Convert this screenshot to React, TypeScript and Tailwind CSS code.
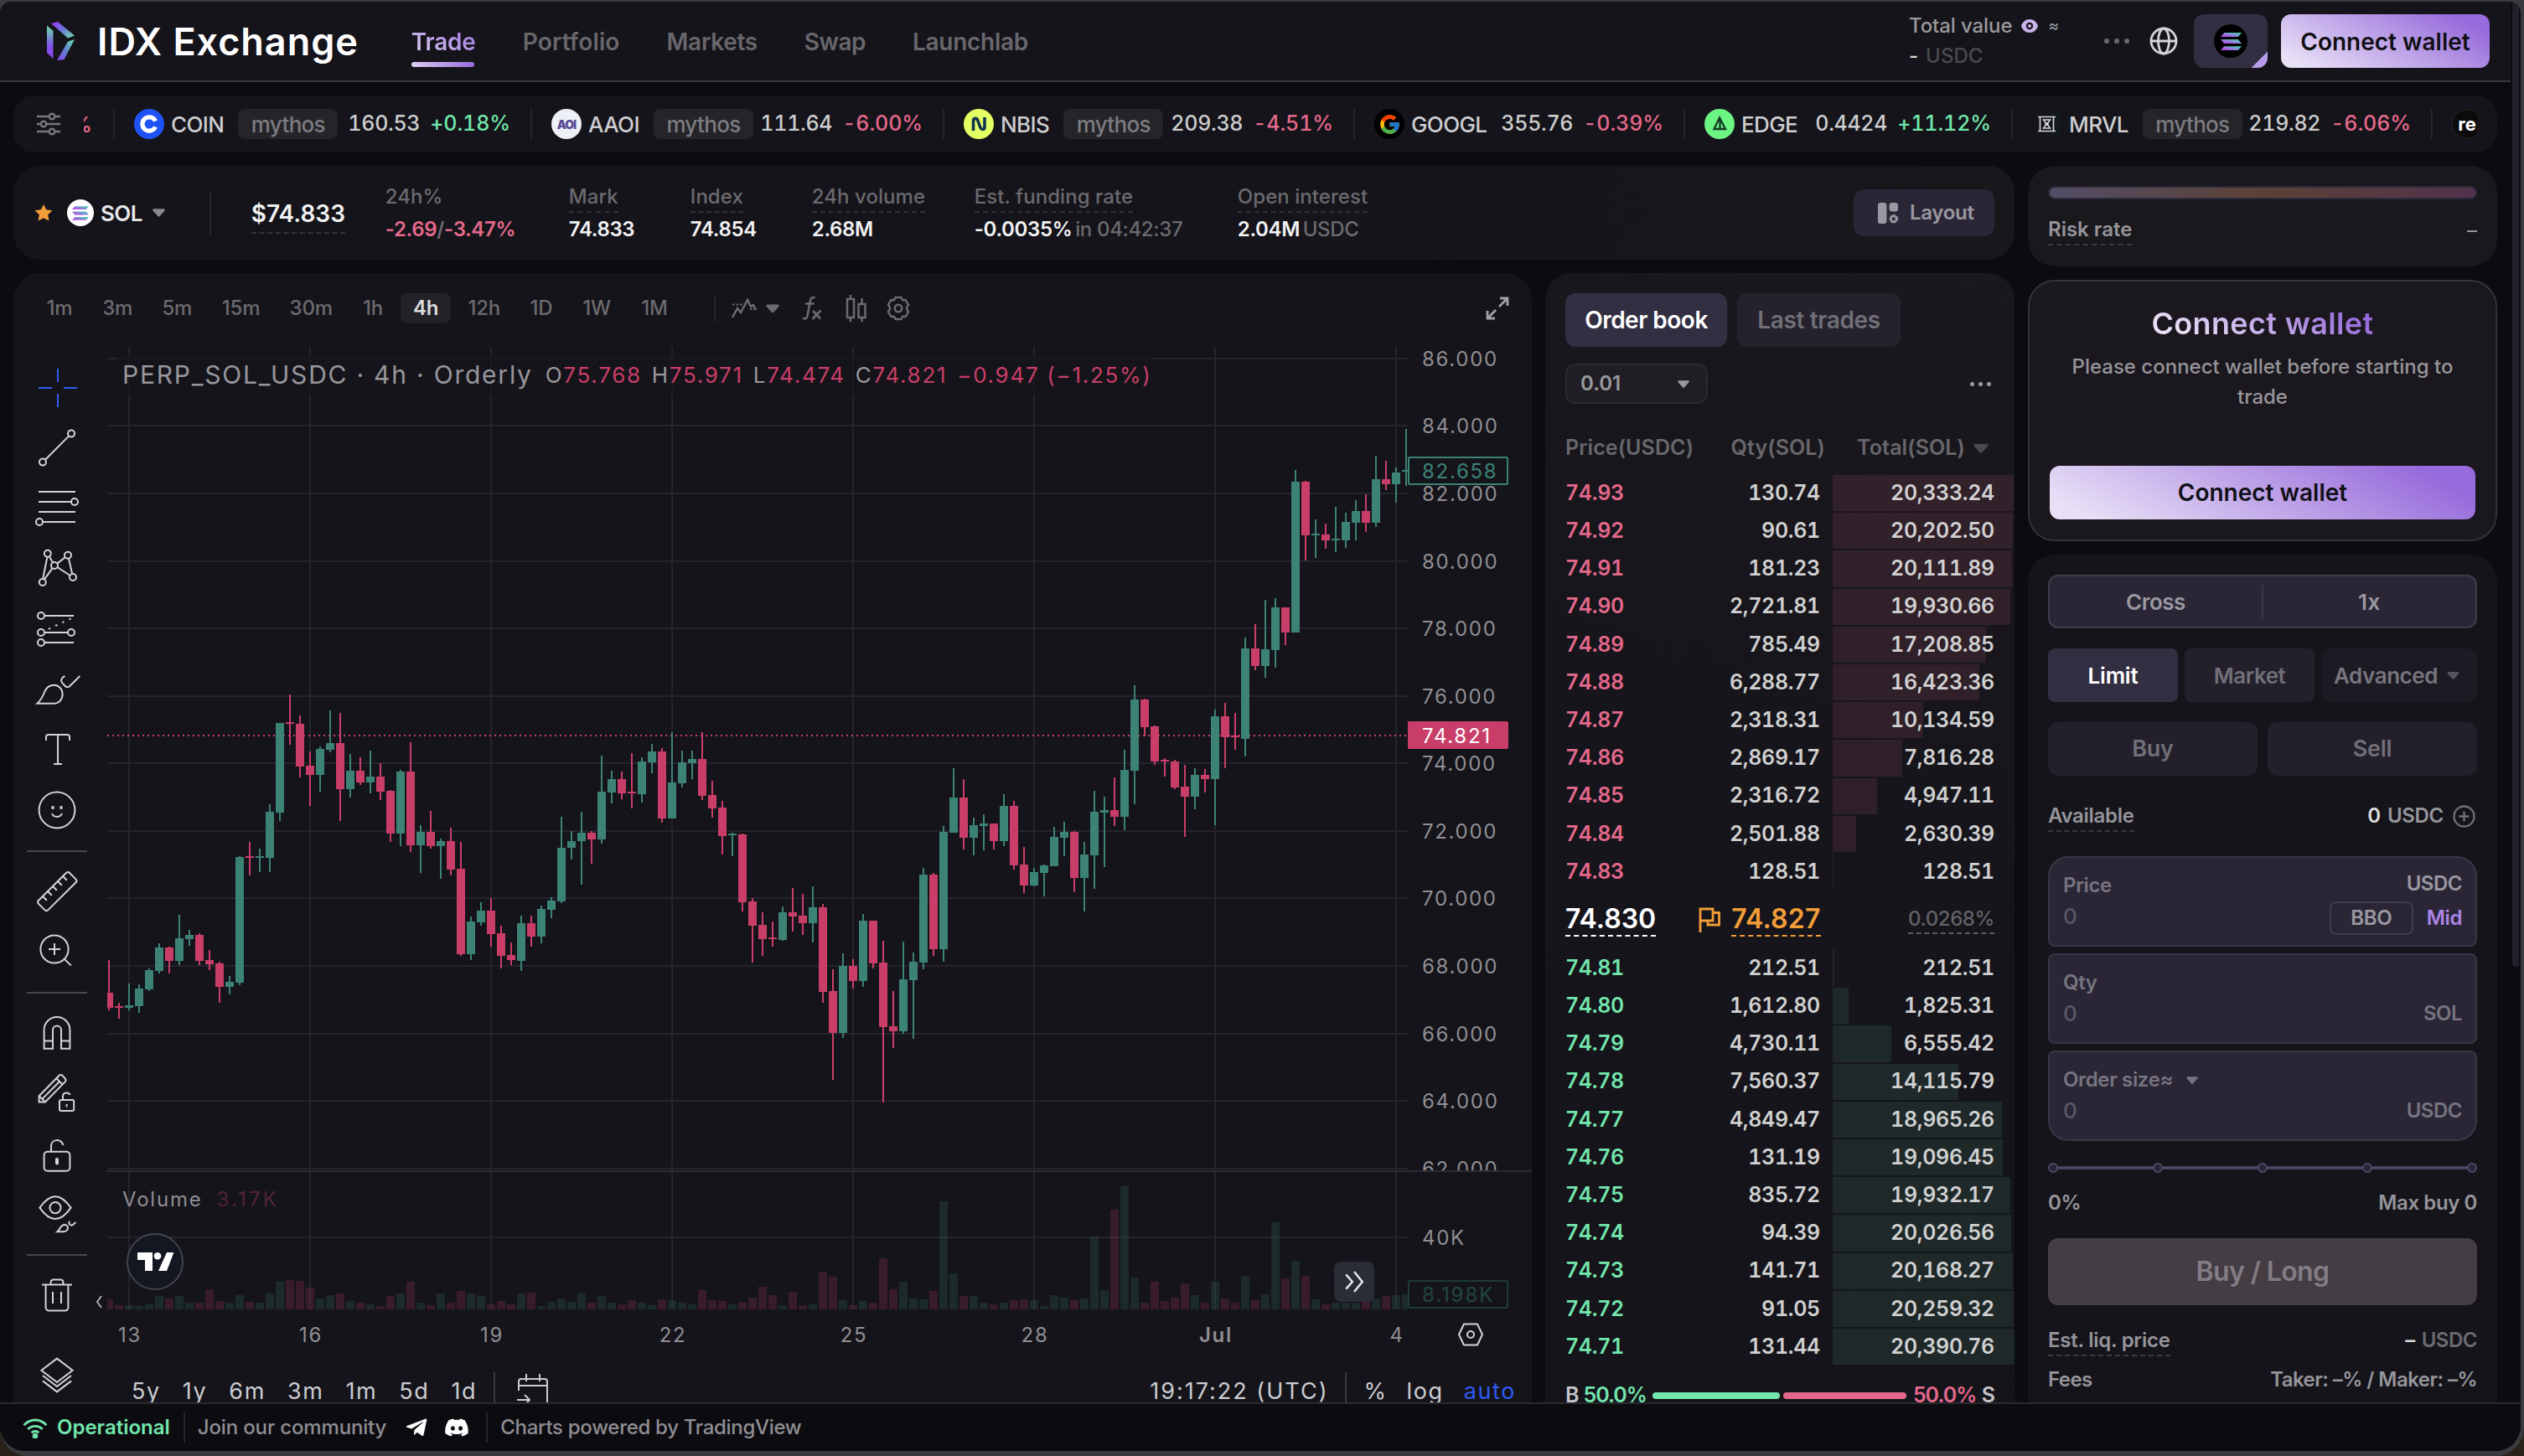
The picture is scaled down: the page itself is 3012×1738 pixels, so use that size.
import type { ReactNode } from "react";
import { FaDiscord, FaTelegramPlane } from "react-icons/fa";
import { FcGoogle } from "react-icons/fc";

/* ---------------------------------- data --------------------------------- */

type Candle = [high: number, top: number, bottom: number, low: number, up: 0 | 1, volume: number];

// One entry per 4h candle, in chart pixels.
const CANDLES: Candle[] = [
  [1146, 1185, 1203, 1206, 0, 12], [1197, 1201, 1203, 1216, 0, 5], [1174, 1200, 1203, 1206, 1, 5],
  [1175, 1180, 1201, 1209, 1, 4], [1156, 1158, 1181, 1183, 1, 6], [1126, 1131, 1159, 1162, 1, 16],
  [1130, 1131, 1147, 1162, 0, 13], [1092, 1120, 1147, 1152, 1, 16], [1110, 1116, 1121, 1129, 1, 8],
  [1114, 1116, 1147, 1152, 0, 8], [1134, 1146, 1151, 1158, 0, 24], [1148, 1150, 1178, 1197, 0, 10],
  [1165, 1172, 1178, 1187, 1, 8], [1022, 1023, 1173, 1176, 1, 17], [1005, 1022, 1024, 1045, 0, 9],
  [1013, 1022, 1024, 1041, 1, 8], [960, 969, 1024, 1041, 1, 19], [863, 863, 970, 980, 1, 33],
  [829, 862, 864, 889, 0, 35], [854, 864, 915, 928, 0, 34], [897, 914, 925, 962, 0, 26],
  [891, 894, 925, 945, 1, 13], [848, 887, 895, 898, 1, 17], [851, 887, 942, 980, 0, 19],
  [900, 920, 942, 952, 1, 10], [904, 920, 934, 937, 0, 8], [896, 927, 934, 947, 1, 6],
  [911, 927, 945, 955, 0, 4], [943, 944, 995, 1005, 0, 16], [919, 921, 995, 1010, 1, 19],
  [886, 921, 1009, 1017, 0, 33], [985, 993, 1009, 1042, 1, 8], [968, 993, 1010, 1013, 0, 5],
  [1001, 1004, 1010, 1049, 1, 19], [988, 1004, 1038, 1045, 0, 8], [1005, 1037, 1139, 1141, 0, 22],
  [1094, 1100, 1139, 1146, 1, 19], [1077, 1087, 1101, 1105, 1, 16], [1072, 1087, 1115, 1130, 0, 6],
  [1105, 1114, 1141, 1156, 0, 10], [1125, 1140, 1146, 1152, 0, 6], [1093, 1102, 1147, 1159, 1, 19],
  [1093, 1102, 1118, 1130, 0, 20], [1081, 1085, 1118, 1126, 1, 4], [1071, 1075, 1086, 1096, 1, 9],
  [975, 1012, 1076, 1078, 1, 13], [992, 1004, 1012, 1026, 1, 9], [969, 994, 1004, 1056, 1, 19],
  [992, 994, 1002, 1031, 0, 8], [902, 945, 1002, 1007, 1, 16], [920, 930, 946, 959, 1, 8],
  [921, 930, 947, 954, 0, 6], [899, 945, 947, 965, 0, 11], [904, 909, 948, 958, 1, 8],
  [888, 897, 910, 923, 1, 5], [893, 897, 977, 982, 0, 12], [874, 934, 977, 977, 1, 11],
  [896, 910, 935, 940, 1, 8], [896, 906, 911, 930, 1, 6], [874, 906, 950, 955, 0, 23],
  [932, 949, 965, 976, 0, 11], [956, 964, 998, 1020, 0, 10], [994, 995, 997, 1022, 1, 6],
  [995, 996, 1077, 1088, 0, 9], [1072, 1076, 1105, 1149, 0, 14], [1089, 1104, 1121, 1141, 0, 27],
  [1100, 1119, 1121, 1130, 0, 17], [1082, 1089, 1122, 1123, 1, 5], [1060, 1089, 1094, 1112, 0, 21],
  [1067, 1093, 1102, 1116, 0, 5], [1058, 1083, 1102, 1125, 1, 6], [1079, 1083, 1184, 1197, 0, 45],
  [1157, 1183, 1233, 1289, 0, 39], [1138, 1153, 1233, 1239, 1, 11], [1145, 1153, 1171, 1180, 0, 5],
  [1091, 1099, 1171, 1178, 1, 10], [1099, 1099, 1150, 1156, 0, 8], [1123, 1149, 1226, 1316, 0, 61],
  [1183, 1225, 1231, 1251, 0, 24], [1124, 1169, 1231, 1234, 1, 33], [1137, 1148, 1170, 1240, 1, 13],
  [1036, 1044, 1149, 1157, 1, 12], [1042, 1044, 1133, 1141, 0, 22], [986, 993, 1133, 1148, 1, 129],
  [917, 952, 994, 994, 1, 43], [930, 952, 1000, 1014, 0, 16], [976, 985, 1000, 1021, 1, 16],
  [972, 983, 986, 1015, 1, 8], [983, 983, 1004, 1014, 0, 6], [948, 962, 1004, 1010, 1, 8],
  [956, 962, 1033, 1038, 0, 11], [1011, 1032, 1057, 1066, 0, 12], [1036, 1041, 1057, 1058, 1, 11],
  [1032, 1033, 1042, 1070, 1, 4], [987, 999, 1034, 1034, 1, 17], [981, 993, 1000, 1022, 1, 14],
  [992, 993, 1048, 1065, 0, 11], [1005, 1020, 1048, 1088, 1, 13], [944, 969, 1021, 1061, 1, 87],
  [951, 967, 970, 1035, 1, 23], [928, 967, 975, 986, 0, 119], [895, 919, 975, 991, 1, 147],
  [818, 835, 920, 960, 1, 38], [834, 835, 868, 879, 0, 8], [866, 867, 909, 913, 0, 33],
  [905, 907, 909, 927, 0, 10], [907, 909, 940, 942, 0, 14], [913, 939, 951, 999, 0, 31],
  [917, 925, 951, 966, 1, 17], [918, 925, 930, 946, 0, 8], [847, 855, 930, 985, 1, 33],
  [839, 855, 880, 917, 0, 13], [851, 878, 880, 895, 0, 8], [761, 774, 882, 903, 1, 40],
  [745, 774, 795, 800, 0, 11], [716, 775, 795, 809, 1, 18], [714, 725, 776, 797, 1, 104],
  [725, 725, 755, 770, 0, 37], [561, 575, 755, 755, 1, 58], [574, 575, 639, 669, 0, 40],
  [620, 637, 639, 666, 1, 12], [625, 638, 645, 655, 0, 6], [605, 643, 645, 659, 1, 8],
  [612, 623, 645, 654, 1, 8], [597, 610, 624, 645, 1, 8], [590, 610, 624, 635, 0, 10],
  [544, 572, 624, 629, 1, 13], [550, 572, 578, 585, 0, 16], [558, 564, 578, 600, 1, 17],
  [512, 561, 563, 580, 1, 18],
];

const PRICE_LEVELS: [string, number][] = [
  ["86.000", 428], ["84.000", 508], ["82.000", 589], ["80.000", 670], ["78.000", 750],
  ["76.000", 831], ["74.000", 911], ["72.000", 992], ["70.000", 1072], ["68.000", 1153],
  ["66.000", 1234], ["64.000", 1314], ["62.000", 1395],
];

const DAYS: [string, number][] = [
  ["13", 154], ["16", 370], ["19", 586], ["22", 802], ["25", 1018], ["28", 1234], ["Jul", 1450], ["4", 1666],
];

const ASKS: [string, string, string][] = [
  ["74.93", "130.74", "20,333.24"], ["74.92", "90.61", "20,202.50"], ["74.91", "181.23", "20,111.89"],
  ["74.90", "2,721.81", "19,930.66"], ["74.89", "785.49", "17,208.85"], ["74.88", "6,288.77", "16,423.36"],
  ["74.87", "2,318.31", "10,134.59"], ["74.86", "2,869.17", "7,816.28"], ["74.85", "2,316.72", "4,947.11"],
  ["74.84", "2,501.88", "2,630.39"], ["74.83", "128.51", "128.51"],
];

const BIDS: [string, string, string][] = [
  ["74.81", "212.51", "212.51"], ["74.80", "1,612.80", "1,825.31"], ["74.79", "4,730.11", "6,555.42"],
  ["74.78", "7,560.37", "14,115.79"], ["74.77", "4,849.47", "18,965.26"], ["74.76", "131.19", "19,096.45"],
  ["74.75", "835.72", "19,932.17"], ["74.74", "94.39", "20,026.56"], ["74.73", "141.71", "20,168.27"],
  ["74.72", "91.05", "20,259.32"], ["74.71", "131.44", "20,390.76"],
];

const TIMEFRAMES: [string, string][] = [
  ["1m", "w-[62px]"], ["3m", "w-[66px]"], ["5m", "w-[66px]"], ["15m", "w-[76px]"], ["30m", "w-[81px]"],
  ["1h", "w-[56px]"], ["4h", "w-[60px]"], ["12h", "w-[69px]"], ["1D", "w-[57px]"], ["1W", "w-[65px]"], ["1M", "w-[62px]"],
];

/* --------------------------------- icons --------------------------------- */

function SolanaMark({ className }: { className: string }) {
  return (
    <svg viewBox="0 0 24 20" className={className}>
      <defs>
        <linearGradient id="sol" x1="1" y1="0" x2="0" y2="1">
          <stop offset="0" stopColor="#35e9a5" />
          <stop offset="0.5" stopColor="#8a86d8" />
          <stop offset="1" stopColor="#c92af0" />
        </linearGradient>
      </defs>
      <g fill="url(#sol)">
        <path d="M4 0h20l-4 4.6H0z" />
        <path d="M0 7.7h20l4 4.6H4z" />
        <path d="M4 15.4h20L20 20H0z" />
      </g>
    </svg>
  );
}

function Caret({ className }: { className: string }) {
  return (
    <svg viewBox="0 0 16 10" className={className}>
      <path d="M2 0h12c1.600 0 2.300 1.400 1.300 2.500L9.300 9.200c-.7.800-1.900.800-2.600 0L.7 2.500C-.3 1.400.4 0 2 0z" fill="currentColor" />
    </svg>
  );
}

function Dots({ className }: { className: string }) {
  return (
    <svg viewBox="0 0 30 6" className={className} fill="currentColor">
      <circle cx="3" cy="3" r="3" />
      <circle cx="15" cy="3" r="3" />
      <circle cx="27" cy="3" r="3" />
    </svg>
  );
}

function Tool({ children }: { children: ReactNode }) {
  return (
    <div className="flex h-[72px] items-center justify-center">
      <svg viewBox="0 0 28 28" className="size-[56px] text-[#d1d4dc]" fill="none" stroke="currentColor" strokeWidth="1">
        {children}
      </svg>
    </div>
  );
}

function ToolRule() {
  return (
    <div className="flex h-[25px] items-center">
      <div className="h-[2px] w-[72px] bg-[#46464d]" />
    </div>
  );
}

function Toolbar() {
  return (
    <div className="ml-4 flex w-[72px] flex-col pt-[17px]">
      <Tool>
        <path stroke="#2f5bf0" d="M3 14h8M18 14h8M14.500 2.500v8M14.500 17.500v8" />
      </Tool>
      <Tool>
        <circle cx="5.500" cy="22.300" r="2" />
        <circle cx="22.500" cy="5.300" r="2" />
        <path d="M7 20.900 21 6.800" />
      </Tool>
      <Tool>
        <path d="M3 4h22M3 10h19.500M3 16h22M5.500 22H25" />
        <circle cx="24.500" cy="10" r="2" />
        <circle cx="3.500" cy="22" r="2" />
      </Tool>
      <Tool>
        <circle cx="8.400" cy="4.900" r="2" />
        <circle cx="20.500" cy="5.900" r="2" />
        <circle cx="12.500" cy="12" r="2" />
        <circle cx="5.400" cy="22" r="2" />
        <circle cx="23.500" cy="19" r="2" />
        <path d="M9.400 6.600l2.100 3.700M8.200 6.900 5.600 20M11.300 13.600l-4.800 6.700M14.100 10.800l4.800-3.700M14.200 13l7.600 5M21 7.900l2.100 9.100" />
      </Tool>
      <Tool>
        <circle cx="4.500" cy="6" r="2" />
        <circle cx="4.500" cy="16" r="2" />
        <circle cx="22.500" cy="16" r="2" />
        <circle cx="4.500" cy="22" r="2" />
        <path d="M6.500 6H24M6.500 16h14M6.500 22H24" />
        <path d="M9 13.900 22.500 7.600" strokeDasharray="1.200 3.300" />
      </Tool>
      <Tool>
        <path d="M2.200 22.400h9.800c3.400 0 5.300-2.700 5.300-5.700 0-3-2.300-5.300-5-5.300-2.800 0-4.400 1.200-5.500 3.600C5.500 18.400 4.200 20.600 2.200 22.400z" />
        <path d="M18.700 6c-2.400 1.100-2.600 3-1.400 4.300l1.800 1.800c.8.800 1.800.600 2.500-.1L27.700 6" />
      </Tool>
      <Tool>
        <path d="M7.500 8.500V6.300C7.500 5.500 8 5 8.800 5h11.400c.8 0 1.300.5 1.300 1.300v2.200M14.500 5v17.500M12 22.500h5" />
      </Tool>
      <Tool>
        <circle cx="14" cy="14" r="10.700" />
        <path d="M11 16c1 2.600 5 2.600 6 0" />
        <path d="M10.700 12.500h1.600M15.700 12.500h1.600" strokeWidth="1.700" />
      </Tool>
      <ToolRule />
      <Tool>
        <path d="M19.600 2.900c.5-.5 1.300-.5 1.800 0l3.900 3.900c.5.500.5 1.300 0 1.800L8.600 25.200c-.5.500-1.300.5-1.800 0l-3.900-3.900c-.5-.5-.5-1.300 0-1.800z" />
        <path d="M5.500 17l2.400 2.400M8.500 14l2.400 2.400M11.500 11l2.400 2.400M14.500 8l2.400 2.400M17.500 5l2.400 2.400" />
      </Tool>
      <Tool>
        <circle cx="12.500" cy="12.500" r="8.300" />
        <path d="M18.300 18.300l4.200 4M12.500 9v7M9 12.500h7" />
      </Tool>
      <ToolRule />
      <Tool>
        <path d="M6.300 23.400V12.200a7.700 7.700 0 0 1 15.400 0v11.200h-5.200V12.300a2.500 2.500 0 0 0-5 0v11.100zM6.300 18.700h5.200M16.500 18.700h5.200" />
      </Tool>
      <Tool>
        <path d="M3.300 19.200v-3.600L15.200 3.500c.6-.6 1.500-.6 2.100 0l1.500 1.600c.6.600.6 1.500 0 2.100L7 19.200zM3.300 15.600 7 19.200M13.700 5.100l3.500 3.600M5.300 17.300 15.500 7" />
        <rect x="15.500" y="18" width="8.600" height="6.500" rx="1" />
        <path d="M17.500 18v-2.200c0-2.600 3.600-2.600 4.300-.8M19.800 20.500v1.600" />
      </Tool>
      <Tool>
        <rect x="6.300" y="12.900" width="15.400" height="11.500" rx="2" />
        <path d="M10.500 12.900V9.500c0-4.200 5.800-4.800 7.200-.5" />
        <path d="M14 17.500v2.300" strokeWidth="2" strokeLinecap="round" />
      </Tool>
      <Tool>
        <path d="M3.700 10.300C6.800 5.900 9.800 3.600 13 3.600s6.200 2.300 9.300 6.700c-3.100 4.400-6.100 6.700-9.300 6.700s-6.200-2.300-9.300-6.700z" />
        <circle cx="13" cy="10.300" r="3.300" />
        <path d="M14.200 24.600h3.300c2 0 3-1.200 3-2.300s-1-1.800-2-1.800c-2.400 0-2.600 2.800-4.300 4.100zM21.700 18.400c-.8.900-.6 1.500 0 2s1.200.6 1.800.1l1.700-1.500" />
      </Tool>
      <ToolRule />
      <Tool>
        <path d="M5 7.700h18M7.300 7.700v13.600c0 1.100.9 2 2 2h9.400c1.100 0 2-.9 2-2V7.700M10.300 7.500V6.200c0-.8.700-1.500 1.500-1.500h4.400c.8 0 1.500.7 1.500 1.500v1.300M11.500 12v7M16.500 12v7" />
      </Tool>
      <div className="h-[24px]" />
      <Tool>
        <path d="M14 3.800l9.300 7.100L14 18l-9.300-7.100zM5.500 14l8.500 6.500 8.500-6.500M5.500 17.200 14 23.700l8.500-6.500" />
      </Tool>
    </div>
  );
}

/* ---------------------------------- chart -------------------------------- */

const UP = "#3c8275";
const DOWN = "#c93e68";

function ChartCanvas() {
  return (
    <svg viewBox="128 414 1700 1206" className="block h-[1206px] w-[1700px] font-['Inter'] text-[24px] tracking-[1.700px]" shapeRendering="crispEdges">
      <clipPath id="plot"><rect x="128" y="414" width="1552" height="1150" /></clipPath>
      <clipPath id="axis"><rect x="1680" y="414" width="148" height="983" /></clipPath>
      <g fill="#25242d">
        {DAYS.map(([d, x]) => <rect key={d} x={x - 1} y="414" width="2" height="1149" />)}
        {PRICE_LEVELS.map(([p, y]) => <rect key={p} x="128" y={y - 1} width="1552" height="2" />)}
        <rect x="128" y="1476" width="1552" height="2" />
      </g>
      <rect x="128" y="1397" width="1700" height="2" fill="#2d2c33" />
      <path d="M128 878h1552" stroke="#c93e68" strokeWidth="2" strokeDasharray="2 4" />
      <g clipPath="url(#plot)">
        {CANDLES.map(([high, top, bottom, low, up, vol], i) => {
          const x = 130 + 12 * i;
          return (
            <g key={i} fill={up ? UP : DOWN}>
              <rect x={x - 5} y={1563 - vol} width="10" height={vol} fillOpacity="0.2" />
              <rect x={x - 1} y={high} width="2" height={low - high} />
              <rect x={x - 5} y={top} width="10" height={Math.max(2, bottom - top)} />
            </g>
          );
        })}
      </g>
      <g fill="#8f8e94" shapeRendering="auto">
        <g clipPath="url(#axis)">
          {PRICE_LEVELS.map(([p, y]) => <text key={p} x="1697" y={y + 9}>{p}</text>)}
        </g>
        <text x="1697" y="1486">40K</text>
        {DAYS.map(([d, x]) => (
          <text key={d} x={x + 1} y="1602" textAnchor="middle" fontWeight={d === "Jul" ? 600 : 400}>{d}</text>
        ))}
      </g>
      <rect x="1681" y="546" width="118" height="32" rx="2" fill="#15141a" stroke={UP} strokeWidth="2" />
      <text x="1697" y="571" fill={UP}>82.658</text>
      <path d="M1680 861h117a3 3 0 0 1 3 3v27a3 3 0 0 1-3 3h-117z" fill={DOWN} />
      <text x="1697" y="887" fill="#fff">74.821</text>
      <rect x="1681" y="1529" width="118" height="32" rx="2" fill="#15141a" stroke="#1e3b38" strokeWidth="2" />
      <text x="1697" y="1554" fill="#224641" className="tracking-[1.900px]">8.198K</text>
      <g shapeRendering="auto" fill="none" stroke="#d1d4dc" strokeWidth="2">
        <path d="M1741 1593l6-12.500h16l6 12.500-6 12.500h-16z" />
        <circle cx="1755" cy="1593" r="4" />
      </g>
    </svg>
  );
}

function LegendPair({ name, value }: { name: string; value: string }) {
  return (
    <span>{name}<span className="text-[#c93e68]">{value}</span></span>
  );
}

function ChartPanel() {
  return (
    <section className="flex h-[1400px] w-[1812px] shrink-0 flex-col rounded-[32px] bg-[#15141a]">
      <div className="flex h-[84px] items-center pl-6 pr-[27px] text-[24px] font-medium tracking-[-0.200px] text-[#6b6a6f]">
        <div className="flex gap-[5.200px]">
          {TIMEFRAMES.map(([t, w]) => (
            <div key={t} className={`flex h-9 items-center justify-center rounded-[8px] ${w} ${t === "4h" ? "bg-[#242229] font-semibold text-[#dcdcdd]" : ""}`}>{t}</div>
          ))}
        </div>
        <div className="ml-[40px] h-8 w-[2px] bg-[#27262c]" />
        <svg viewBox="0 0 30 28" className="ml-[19px] h-[28px] w-[30px]" fill="none" stroke="currentColor" strokeWidth="2.500">
          <path d="M1 25l6-11 4 5 8-15 4 8 3-2 3 6" />
          <path d="M1 9.500h12M22 15h7" strokeWidth="1.800" strokeDasharray="2.500 2" />
        </svg>
        <Caret className="ml-[11px] h-[11px] w-[16px]" />
        <svg viewBox="0 0 24 30" className="ml-[27px] h-[30px] w-[24px]" fill="none" stroke="currentColor" strokeWidth="2.600">
          <path d="M15.500 2.500C12 1 10.500 3 10 6L6.500 24c-.6 3-2 4-5.500 3M4 9.500h10.500M13 18l9 9.500M22.500 17.500 12.500 28" />
        </svg>
        <svg viewBox="0 0 26 32" className="ml-[28px] h-[32px] w-[26px]" fill="none" stroke="currentColor" strokeWidth="2.500">
          <path d="M6 0v5M6 27v5M19.500 4v7M19.500 27v5M2 5h8v22H2zM15.500 11h8v16h-8z" />
        </svg>
        <svg viewBox="0 0 30 30" className="ml-[22px] size-[30px]" fill="none" stroke="currentColor" strokeWidth="2.500" strokeLinejoin="round">
          <path d="M11.500 2h7l1.500 3.200 3.500-.3 3.600 5.900-2 2.900v2.600l2 2.900-3.600 5.900-3.500-.3-1.500 3.200h-7L10 24.800l-3.500.3-3.600-5.900 2-2.900v-2.600l-2-2.900 3.600-5.900 3.500.3z" />
          <circle cx="15" cy="15" r="4.300" />
        </svg>
        <svg viewBox="0 0 28 28" className="ml-auto size-[28px] text-[#a2a1a4]" fill="none" stroke="currentColor" strokeWidth="2.800">
          <path d="M17 2h9v9M26 2 16 12M11 26H2v-9M2 26l10-10" />
        </svg>
      </div>
      <div className="flex">
        <Toolbar />
        <div className="relative ml-6 w-[1700px] pt-[4px]">
          <ChartCanvas />
          <div className="absolute left-[12px] top-[13px] flex h-[49px] items-center gap-[15px] bg-[#15141a]/60 pl-[6px] text-[26px] tracking-[1.700px] text-[#98979c]">
            <span className="text-[30px] tracking-[1.780px]">PERP_SOL_USDC · 4h · Orderly</span>
            <span className="flex gap-[12px]">
              <LegendPair name="O" value="75.768" />
              <LegendPair name="H" value="75.971" />
              <LegendPair name="L" value="74.474" />
              <LegendPair name="C" value="74.821" />
              <span className="text-[#c93e68]">−0.947 (−1.25%)</span>
            </span>
          </div>
          <div className="absolute left-[18px] top-[1003px] flex h-[38px] items-center gap-[17px] text-[24px] tracking-[1.800px] text-[#8f8e94]">
            Volume<span className="tracking-[3.200px] text-[#54233a]">3.17K</span>
          </div>
          <div className="absolute left-[23px] top-[1062px] flex size-[68px] items-center justify-center rounded-full border-2 border-[#43444e] bg-[#131722]">
            <svg viewBox="164 1496 43 22" className="h-[22px] w-[43px]" fill="#fff">
              <path d="M164 1496h18v22h-9v-13h-9zM199 1496h8.500l-8.500 22h-10z" />
              <circle cx="188" cy="1500.300" r="4.300" />
            </svg>
          </div>
          <div className="absolute left-[1464px] top-[1096px] flex size-[48px] items-center justify-center rounded-[8px] bg-[#2a2c37]">
            <svg viewBox="0 0 24 24" className="size-[26px]" fill="none" stroke="#e6e6ea" strokeWidth="2.300">
              <path d="M3 4l7 8-7 8M12 1l9 11-9 11" />
            </svg>
          </div>
          <svg viewBox="0 0 8 16" className="absolute left-[-14px] top-[1136px] h-[16px] w-[8px]" fill="none" stroke="#a9a9ae" strokeWidth="2">
            <path d="M7 1 2 8l5 7" />
          </svg>
          <div className="flex h-[82px] items-center pl-[29px] pr-[19px] text-[27px] tracking-[1.600px] text-[#cbccd1]">
            <div className="flex gap-[26px]">
              <span>5y</span><span>1y</span><span>6m</span><span>3m</span><span>1m</span><span>5d</span><span>1d</span>
            </div>
            <div className="ml-[20px] h-[46px] w-[2px] bg-[#393940]" />
            <svg viewBox="0 0 40 42" className="ml-[25px] h-[42px] w-[40px]" fill="none" stroke="currentColor" strokeWidth="2">
              <path d="M3 20V9c0-2 1-3 3-3h28c2 0 3 1 3 3v26c0 2-1 3-3 3H18M3 14h34M12 0v9M28 0v9M1 31h15M10 25l6 6-6 6" />
            </svg>
            <span className="ml-auto tracking-[2px]">19:17:22 (UTC)</span>
            <div className="ml-[20px] h-[46px] w-[2px] bg-[#393940]" />
            <span className="ml-[20px]">%</span>
            <span className="ml-[23px]">log</span>
            <span className="ml-[24px] text-[#2f5bf0]">auto</span>
          </div>
        </div>
      </div>
    </section>
  );
}

/* ------------------------------- order book ------------------------------ */

function BookRow({ row, side }: { row: [string, string, string]; side: "ask" | "bid" }) {
  const share = Number(row[2].replace(/,/g, "")) / 20390.76;
  return (
    <div className="flex h-[45.200px] items-center pl-6 text-[25px] font-semibold tabular-nums tracking-[-0.300px] text-[#d0d0d1]">
      <span className={side === "ask" ? "w-[120px] text-[#e4688b]" : "w-[120px] text-[#72e6ad]"}>{row[0]}</span>
      <span className="w-[184px] text-right">{row[1]}</span>
      <div className="relative ml-[15px] flex h-[43.200px] w-[217px] items-center justify-end pr-6">
        <div
          className={side === "ask" ? "absolute left-0 top-0 h-full bg-[#e4688b]/12" : "absolute left-0 top-0 h-full bg-[#72e6ad]/10"}
          style={{ width: `${share * 100}%` }}
        />
        <span className="relative">{row[2]}</span>
      </div>
    </div>
  );
}

function OrderBook() {
  return (
    <section className="flex h-[1400px] w-[560px] shrink-0 flex-col rounded-[32px] bg-[linear-gradient(200deg,#1a181d_0%,#16151b_45%,#15141a_100%)] pt-6">
      <div className="flex gap-3 pl-6 text-[28px] font-semibold">
        <div className="flex h-16 w-[193px] items-center justify-center rounded-[12px] bg-[#332f42] tracking-[-0.500px] text-white">Order book</div>
        <div className="flex h-16 w-[195px] items-center justify-center rounded-[12px] bg-[#25222e] tracking-[-0.350px] text-[#716f78]">Last trades</div>
      </div>
      <div className="mt-5 flex h-12 items-center justify-between pl-6 pr-7">
        <div className="flex h-12 w-[170px] items-center justify-between rounded-[12px] border-2 border-[#2b2a30] bg-[#201e24] pl-4 pr-[20px] text-[24px] font-semibold text-[#9a999c]">
          0.01
          <Caret className="h-[9px] w-[14px]" />
        </div>
        <Dots className="h-[5px] w-[25px] text-[#9a999c]" />
      </div>
      <div className="mt-[33px] flex h-10 items-center pl-6 text-[25px] font-semibold tracking-[0.100px] text-[#68676c]">
        <span className="w-[160px]">Price(USDC)</span>
        <span className="w-[150px] text-right">Qty(SOL)</span>
        <span className="w-[167px] text-right">Total(SOL)</span>
        <Caret className="ml-[10px] h-[11px] w-[18px] text-[#4a494e]" />
      </div>
      <div className="mt-[11px]">
        {ASKS.map((r) => <BookRow key={r[0]} row={r} side="ask" />)}
      </div>
      <div className="flex h-[70px] items-center pl-6 pr-6 text-[32px] font-semibold">
        <span className="border-b-2 border-dashed border-white leading-[38px] text-white">74.830</span>
        <svg viewBox="0 0 26 30" className="ml-[51px] h-[30px] w-[26px]" fill="none" stroke="#f29d38" strokeWidth="2.800">
          <path d="M2 30V2h15v14H2M17 6.500h7.500V21H11v-5" />
        </svg>
        <span className="ml-[13px] border-b-2 border-dashed border-[#f29d38] leading-[38px] tracking-[0.250px] text-[#f29d38]">74.827</span>
        <span className="ml-auto border-b-2 border-dashed border-[#5d5c61] text-[24px] font-medium leading-[32px] tracking-[-0.400px] text-[#626166]">0.0268%</span>
      </div>
      <div>
        {BIDS.map((r) => <BookRow key={r[0]} row={r} side="bid" />)}
      </div>
      <div className="mt-[20px] flex h-8 items-center pl-6 pr-6 text-[25px] font-semibold tracking-[-1px] text-[#c6c6c8]">
        <span>B</span>
        <span className="ml-[6px] text-[#72e6ad]">50.0%</span>
        <div className="ml-[7px] h-2 w-[152px] rounded-full bg-[#72e6ad]" />
        <div className="ml-1 h-2 w-[147px] rounded-full bg-[#e4688b]" />
        <span className="ml-[8px] text-[#e4688b]">50.0%</span>
        <span className="ml-auto">S</span>
      </div>
    </section>
  );
}

/* ------------------------------- trade column ---------------------------- */

function RiskCard() {
  return (
    <section className="flex h-[120px] shrink-0 flex-col rounded-[32px] bg-[#19181d] px-6 pt-6">
      <div className="h-4 rounded-full border-2 border-[#2d2a3c] bg-[linear-gradient(90deg,#524d66,#5c4136_50%,#52324c)]" />
      <div className="mt-[19px] flex items-start justify-between text-[24px] font-semibold text-[#96959a]">
        <span className="border-b-2 border-dashed border-[#3a393e] leading-[34px]">Risk rate</span>
        <span className="mt-[18px] h-[2px] w-[12px] bg-[#96959a]" />
      </div>
    </section>
  );
}

const WALLET_GRADIENT = "bg-[linear-gradient(28deg,#e8e0f6_8%,#976bdb_88%)]";

function ConnectCard() {
  return (
    <section className="flex h-[312px] shrink-0 flex-col items-center rounded-[32px] border-2 border-[#333237] bg-[#1a181e] px-[22px] pt-[26px]">
      <h2 className="bg-[linear-gradient(28deg,#e8e0f6_18%,#976bdb_85%)] bg-clip-text text-[36px] font-semibold leading-[48px] tracking-[0.350px] text-transparent">Connect wallet</h2>
      <p className="mt-[10px] px-6 text-center text-[24px] font-medium leading-[36px] text-[#96959a]">Please connect wallet before starting to trade</p>
      <button className="mt-[64px] h-16 w-[508px] rounded-[12px] bg-[linear-gradient(28deg,#e8e0f6_8%,#976bdb_88%)] text-[28px] font-semibold text-[#111016]">Connect wallet</button>
    </section>
  );
}

function Field({ label, unit, className, children }: { label: ReactNode; unit: ReactNode; className: string; children?: ReactNode }) {
  return (
    <div className={`flex h-[108px] justify-between border-2 border-[#3a3646] bg-[#2a2636] px-4 text-[24px] font-semibold ${className}`}>
      <div className="flex flex-col pt-[15px] text-[#77747f]">
        <div className="flex h-9 items-center tracking-[-0.350px]">{label}</div>
        <div className="flex h-9 items-center text-[26px] font-medium text-[#5a5765]">0</div>
      </div>
      <div className="flex flex-col items-end">
        {children}
        {unit}
      </div>
    </div>
  );
}

function TradeCard() {
  return (
    <section className="flex h-[1060px] shrink-0 flex-col rounded-[32px] bg-[#15141a] px-6 pt-6">
      <div className="flex h-16 shrink-0 items-center rounded-[12px] border-2 border-[#403c4b] bg-[#2a2636] text-[26px] font-semibold tracking-[-0.500px] text-[#9a98a0]">
        <span className="flex-1 text-center">Cross</span>
        <span className="h-10 w-[2px] bg-[#3b3747]" />
        <span className="flex-1 text-center tracking-[0.500px]">1x</span>
      </div>
      <div className="mt-6 flex gap-2 text-[26px] font-semibold tracking-[-0.450px]">
        <div className="flex h-16 w-[155px] items-center justify-center rounded-[8px] bg-[#332f42] tracking-[-0.200px] text-white">Limit</div>
        <div className="flex h-16 w-[155px] items-center justify-center rounded-[8px] bg-[#23202c] text-[#716f78]">Market</div>
        <div className="flex h-16 flex-1 items-center justify-between rounded-[12px] bg-[#1c1a23] pl-[15px] pr-[21px] text-[#77757d]">
          Advanced
          <Caret className="h-[9px] w-[15px] text-[#55535c]" />
        </div>
      </div>
      <div className="mt-6 flex gap-3 text-[27px] font-semibold tracking-[-0.300px] text-[#716f78]">
        <div className="flex h-16 flex-1 items-center justify-center rounded-[12px] bg-[#23202c]">Buy</div>
        <div className="flex h-16 flex-1 items-center justify-center rounded-[12px] bg-[#23202c]">Sell</div>
      </div>
      <div className="mt-[31px] flex h-9 items-start text-[24px] font-semibold leading-[34px] tracking-[-0.300px] text-[#96959a]">
        <span className="border-b-2 border-dashed border-[#3a393e]">Available</span>
        <span className="ml-auto text-[#dcdcdd]">0</span>
        <span className="ml-[8px]">USDC</span>
        <svg viewBox="0 0 27 27" className="ml-[11px] mr-[2px] mt-[4px] size-[27px]" fill="none" stroke="#717075" strokeWidth="2.300">
          <circle cx="13.500" cy="13.500" r="12" />
          <path d="M13.500 7.500v12M7.500 13.500h12" />
        </svg>
      </div>
      <div className="mt-[29px] flex flex-col gap-2">
        <Field
          label="Price"
          className="rounded-b-[8px] rounded-t-[24px]"
          unit={
            <div className="mt-[4px] flex items-center gap-[16px] tracking-[-0.400px]">
              <span className="flex h-10 w-[100px] items-center justify-center rounded-[8px] border-2 border-[#403c4b] text-[#9a98a0]">BBO</span>
              <span className="text-[#ab85e6]">Mid</span>
            </div>
          }
        >
          <span className="mt-[14px] leading-[34px] tracking-[-0.500px] text-[#9a98a0]">USDC</span>
        </Field>
        <Field label="Qty" className="rounded-[8px]" unit={<span className="mt-[52px] leading-[36px] tracking-[-0.500px] text-[#77747f]">SOL</span>} />
        <Field
          label={<>Order size≈<Caret className="ml-[16px] h-[9px] w-[14px]" /></>}
          className="rounded-b-[24px] rounded-t-[8px]"
          unit={<span className="mt-[52px] leading-[36px] tracking-[-0.500px] text-[#77747f]">USDC</span>}
        />
      </div>
      <svg viewBox="0 0 512 14" className="mt-[25px] block h-[14px] w-[512px] shrink-0" stroke="#4e4869" fill="#29253a">
        <path d="M6 7h500" strokeWidth="3.500" />
        {[6, 131, 256, 381, 506].map((x) => <circle key={x} cx={x} cy="7" r="5" strokeWidth="2" />)}
      </svg>
      <div className="mt-[17px] flex h-9 items-center justify-between text-[24px] font-semibold tracking-[-0.400px] text-[#96959a]">
        <span>0%</span>
        <span>Max buy 0</span>
      </div>
      <div className="mt-6 flex h-20 shrink-0 items-center justify-center rounded-[12px] bg-[#443d44] text-[32px] font-semibold tracking-[-0.600px] text-[#837c84]">Buy / Long</div>
      <div className="mt-[25px] flex h-[36px] items-start justify-between text-[24px] font-semibold leading-[34px] tracking-[-0.250px] text-[#96959a]">
        <span className="border-b-2 border-dashed border-[#3a393e]">Est. liq. price</span>
        <span className="tracking-[-0.500px]"><span className="mr-[8px] text-[#dcdcdd]">–</span><span className="text-[#6b6a6f]">USDC</span></span>
      </div>
      <div className="mt-[10px] flex h-9 items-center justify-between text-[24px] font-semibold tracking-[-0.550px] text-[#96959a]">
        <span>Fees</span>
        <span>Taker: –% / Maker: –%</span>
      </div>
    </section>
  );
}

/* ----------------------------- header & ticker --------------------------- */

function Header() {
  return (
    <header className="flex h-[96px] shrink-0 items-center border-b-2 border-[#37363b] bg-[#15141a] pl-[56px] pr-[25px]">
      <svg viewBox="0 0 34 46" className="h-[46px] w-[34px]">
        <defs>
          <linearGradient id="lg1" x1="0" y1="0" x2="0" y2="1"><stop offset="0" stopColor="#6be3a6" /><stop offset="0.600" stopColor="#7f55ea" /><stop offset="1" stopColor="#8a45ee" /></linearGradient>
          <linearGradient id="lg2" x1="0" y1="0" x2="1" y2="1"><stop offset="0.100" stopColor="#8f3df2" /><stop offset="0.500" stopColor="#6a7bdc" /><stop offset="1" stopColor="#6be3a6" /></linearGradient>
          <linearGradient id="lg3" x1="1" y1="0" x2="0" y2="1"><stop offset="0" stopColor="#6be3a6" /><stop offset="0.500" stopColor="#5f83cf" /><stop offset="1" stopColor="#8a45ee" /></linearGradient>
        </defs>
        <path d="M0 4.500 7.500 11v33L0 37z" fill="url(#lg1)" />
        <path d="M5 2l8-2 20 16.500-8 3z" fill="url(#lg2)" />
        <path d="M25 23.500l8-2.500-12.500 24L12 46z" fill="url(#lg3)" />
      </svg>
      <span className="ml-[26px] pt-[2px] text-[45px] font-semibold tracking-[0.950px] text-white">IDX Exchange</span>
      <nav className="ml-[63px] flex items-center gap-[56px] pt-[2px] text-[28px] font-semibold text-[#68676c]">
        <span className="relative tracking-[-0.200px]">
          <span className="bg-[linear-gradient(28deg,#dccff2_10%,#976bdb_100%)] bg-clip-text text-transparent">Trade</span>
          <span className="absolute -bottom-[9px] left-0 h-[6px] w-[75px] rounded-[3px] bg-[linear-gradient(90deg,#dccff2,#976bdb)]" />
        </span>
        <span className="tracking-[0.150px]">Portfolio</span>
        <span className="tracking-[-0.300px]">Markets</span>
        <span className="tracking-[-0.500px]">Swap</span>
        <span className="tracking-[-0.300px]">Launchlab</span>
      </nav>
      <div className="ml-auto flex w-[233px] flex-col text-[24px] font-medium leading-[36px] text-[#9a999c]">
        <div className="flex items-center tracking-[-0.100px]">
          Total value
          <svg viewBox="0 0 20 16" className="ml-[11px] h-[16px] w-[20px]">
            <path d="M10 0c5 0 8.500 3.500 10 8-1.500 4.500-5 8-10 8S1.500 12.500 0 8c1.500-4.500 5-8 10-8z" fill="#c9b4ea" />
            <circle cx="10" cy="8" r="4.200" fill="#15141a" />
            <circle cx="10" cy="8" r="2" fill="#c9b4ea" />
          </svg>
          <span className="ml-[12px] text-[19px]">≈</span>
        </div>
        <div><span className="mr-[9px] text-[#dcdcdd]">-</span><span className="text-[#4a494e]">USDC</span></div>
      </div>
      <Dots className="h-[6px] w-[30px] text-[#6b6a6f]" />
      <svg viewBox="0 0 34 34" className="ml-[24px] size-[34px]" fill="none" stroke="#d4d4d6" strokeWidth="2.800">
        <circle cx="17" cy="17" r="15" />
        <ellipse cx="17" cy="17" rx="6.500" ry="15" />
        <path d="M2 17h30" />
      </svg>
      <div className="relative ml-[19px] flex h-16 w-[88px] items-center justify-center overflow-hidden rounded-[12px] bg-[#332f42]">
        <div className="flex size-[40px] items-center justify-center rounded-full bg-black">
          <SolanaMark className="h-[21px] w-[25px]" />
        </div>
        <div className="absolute bottom-0 right-0 size-[20px] bg-[linear-gradient(135deg,transparent_50%,#b79be8_50%)]" />
      </div>
      <button className={`ml-4 h-16 w-[249px] rounded-[12px] pt-[2px] text-[28px] font-semibold text-[#111016] ${WALLET_GRADIENT}`}>Connect wallet</button>
    </header>
  );
}

function TickerItem({ width, icon, name, tag, price, change }: { width: string; icon: ReactNode; name: string; tag?: boolean; price: string; change: string }) {
  return (
    <div className={`flex h-9 shrink-0 items-center border-l-2 border-[#27262c] pl-[23px] pr-[24px] font-medium text-[#cdcdcf] ${width}`}>
      {icon}
      <span className="ml-[8px] tracking-[-0.600px]">{name}</span>
      {tag && <span className="ml-[17px] flex h-9 w-[119px] items-center justify-center rounded-[8px] bg-[#252429] tracking-[-0.700px] text-[#7d7c81]">mythos</span>}
      <span className="ml-auto text-[25px] tabular-nums tracking-[-0.300px]">{price}</span>
      <span className={`ml-[12px] text-[25px] tabular-nums tracking-[-0.100px] ${change[0] === "+" ? "text-[#72e6ad]" : "text-[#e4688b]"}`}>{change}</span>
    </div>
  );
}

function Ticker() {
  return (
    <div className="mx-4 mt-4 flex h-[68px] shrink-0 items-center rounded-[24px] bg-[#15141a] pl-[28px] pr-[24px] text-[26px]">
      <svg viewBox="0 0 28 28" className="h-[28px] w-[28px] shrink-0" fill="none" stroke="#77767b" strokeWidth="2.400">
        <path d="M0 5h14M22 5h6M0 14h4M12 14h16M0 23h14M22 23h6" />
        <circle cx="18" cy="5" r="3.300" />
        <circle cx="8" cy="14" r="3.300" />
        <circle cx="18" cy="23" r="3.300" />
      </svg>
      <div className="ml-[28px] flex h-9 min-w-0 flex-1 items-center overflow-hidden">
        <div className="flex w-[35px] shrink-0 justify-end overflow-hidden pr-[25px] font-medium text-[#e4688b]">
          <span className="flex w-[10px] justify-end overflow-hidden">%</span>
        </div>
        <TickerItem width="w-[498px]" name="COIN" tag price="160.53" change="+0.18%" icon={
          <svg viewBox="0 0 36 36" className="size-9"><circle cx="18" cy="18" r="18" fill="#1f52f5" /><path d="M25.500 14.500a8.200 8.200 0 1 0 0 7" fill="none" stroke="#fff" strokeWidth="5.200" /></svg>
        } />
        <TickerItem width="w-[492px]" name="AAOI" tag price="111.64" change="-6.00%" icon={
          <span className="flex size-9 items-center justify-center rounded-full bg-[#eef0f8] text-[14px] font-black tracking-[-1px] text-[#5b4a97]">AOI</span>
        } />
        <TickerItem width="w-[490px]" name="NBIS" tag price="209.38" change="-4.51%" icon={
          <svg viewBox="0 0 36 36" className="size-9"><circle cx="18" cy="18" r="18" fill="#e2ff63" /><path d="M11.500 26V14.500c0-3.500 3.500-4 5-1.500l3.500 9.500c1.500 3 5 2.500 5-1V10" fill="none" stroke="#13344f" strokeWidth="3.600" /></svg>
        } />
        <TickerItem width="w-[394px]" name="GOOGL" price="355.76" change="-0.39%" icon={
          <span className="flex size-9 items-center justify-center rounded-full bg-black"><FcGoogle className="size-[27px]" /></span>
        } />
        <TickerItem width="w-[391px]" name="EDGE" price="0.4424" change="+11.12%" icon={
          <svg viewBox="0 0 36 36" className="size-9"><circle cx="18" cy="18" r="18" fill="#6cf583" /><path d="M18 10.500 25 24H11.500zM18.500 10.500V24" fill="none" stroke="#123b22" strokeWidth="2.300" /></svg>
        } />
        <TickerItem width="w-[501px]" name="MRVL" tag price="219.82" change="-6.06%" icon={
          <svg viewBox="0 0 36 36" className="size-9"><path d="M18 0a18 18 0 0 1 0 36z" fill="#121a1e" /><g fill="none" stroke="#d8d8da" strokeWidth="1.600"><path d="M7 9.500h21M7 26.500h21M9.500 9.500v17M25.500 9.500v17M12.500 13h10M12.500 23h10M14 13l2.500 5-2.500 5M21 13l-2.500 5 2.500 5M17.500 16v4" /></g></svg>
        } />
        <div className="flex h-9 shrink-0 items-center border-l-2 border-[#27262c] pl-[23px]">
          <span className="flex size-9 items-center justify-center rounded-full border border-[#2c2a28] bg-[#0b0b0b] text-[22px] font-bold text-white">re</span>
        </div>
      </div>
    </div>
  );
}

function Stat({ label, width, plain, children }: { label: string; width: string; plain?: boolean; children: ReactNode }) {
  return (
    <div className={`flex shrink-0 flex-col items-start text-[24px] leading-[32px] ${width}`}>
      <span className={`border-b-2 border-dashed pb-px font-medium tracking-[0.050px] text-[#6b6a6f] ${plain ? "border-transparent" : "border-[#333238]"}`}>{label}</span>
      <span className="mt-1 font-semibold tracking-[-0.350px] text-[#f2f2f3]">{children}</span>
    </div>
  );
}

function InfoBar() {
  return (
    <section className="flex h-[112px] shrink-0 items-center rounded-[32px] bg-[linear-gradient(90deg,#15141a_60%,#19171c_100%)] pl-[25px] pr-6">
      <svg viewBox="0 0 22 20" className="h-[20px] w-[22px]"><path d="M11 0l3.200 6.300 7.300 1-5.300 5 1.300 7.200L11 16.200l-6.500 3.300 1.300-7.200-5.300-5 7.300-1z" fill="#f29d38" /></svg>
      <span className="ml-[17px] flex size-8 items-center justify-center rounded-full bg-white"><SolanaMark className="h-[17px] w-[20px]" /></span>
      <span className="ml-[8px] text-[26px] font-semibold tracking-[-0.600px] text-[#e8e8ea]">SOL</span>
      <Caret className="ml-[12px] h-[10px] w-[15px] text-[#8a898e]" />
      <div className="ml-[53px] h-[52px] w-[2px] bg-[#27262c]" />
      <span className="ml-[48px] mt-[3px] w-[112px] border-b-2 border-dashed border-[#333238] text-[28px] font-semibold leading-[44px] text-[#f2f2f3]">$74.833</span>
      <div className="ml-[48px] flex">
        <Stat label="24h%" width="w-[219px]" plain><span className="text-[#e4688b]">-2.69<span className="text-[#6b6a6f]">/</span>-3.47%</span></Stat>
        <Stat label="Mark" width="w-[145px]">74.833</Stat>
        <Stat label="Index" width="w-[145px]">74.854</Stat>
        <Stat label="24h volume" width="w-[194px]">2.68M</Stat>
        <Stat label="Est. funding rate" width="w-[314px]">-0.0035% <span className="-ml-[2px] font-medium text-[#6b6a6f]">in 04:42:37</span></Stat>
        <Stat label="Open interest" width="w-[160px]">2.04M <span className="-ml-[2px] font-medium text-[#6b6a6f]">USDC</span></Stat>
      </div>
      <div className="ml-auto flex h-14 w-[168px] items-center rounded-[12px] bg-[#2a2636] pl-[29px] text-[24px] font-semibold tracking-[-0.300px] text-[#9a98a0]">
        <svg viewBox="0 0 24 24" className="mr-[13px] size-[25px]" fill="currentColor">
          <rect x="0" y="0" width="10" height="24" rx="3" />
          <rect x="13" y="0" width="10" height="10" rx="3" />
          <circle cx="18" cy="18.500" r="4" fill="none" stroke="currentColor" strokeWidth="2.400" strokeDasharray="2.600 1" />
          <circle cx="18" cy="18.500" r="3" fill="none" stroke="currentColor" strokeWidth="2" />
        </svg>
        Layout
      </div>
    </section>
  );
}

function Footer() {
  return (
    <footer className="flex h-[58px] shrink-0 items-center border-t-2 border-[#2a292f] bg-[#0c0b10] pl-[27px] text-[24px] font-medium text-[#8f8e93]">
      <svg viewBox="0 0 30 26" className="h-[25px] w-[30px]" fill="none" stroke="#72e6ad" strokeWidth="3">
        <path d="M1 9.500C9 1 21 1 29 9.500M6 14.500c5-5 13-5 18 0M10.500 19c2.500-2.500 6.500-2.500 9 0" />
        <circle cx="15" cy="23" r="2" fill="#72e6ad" />
      </svg>
      <span className="ml-[11px] font-semibold text-[#72e6ad]">Operational</span>
      <div className="ml-[16px] h-9 w-[2px] bg-[#27262c]" />
      <span className="ml-[15px] tracking-[-0.150px]">Join our community</span>
      <FaTelegramPlane className="ml-[22px] size-[28px] text-white" />
      <FaDiscord className="ml-[19px] size-[30px] text-white" />
      <div className="ml-[20px] h-9 w-[2px] bg-[#27262c]" />
      <span className="ml-[15px] tracking-[-0.300px]">Charts powered by TradingView</span>
    </footer>
  );
}

export default function App() {
  return (
    <div className="h-[1738px] w-[3012px] overflow-hidden bg-[#2a211b] font-['Inter',sans-serif]">
      <div className="flex h-full w-full flex-col rounded-b-[34px] bg-[#3a393e] pb-[6px] pr-1 pt-[2px]">
        <div className="flex min-h-0 flex-1 flex-col overflow-hidden rounded-b-[30px] rounded-t-[14px] bg-[#0c0b10]">
          <div className="flex min-h-0 flex-1 overflow-hidden">
            <div className="flex w-[2996px] flex-col overflow-hidden">
              <Header />
              <Ticker />
              <main className="mx-4 mt-4 flex min-h-0 flex-1 gap-4 overflow-hidden">
                <div className="flex w-[2388px] shrink-0 flex-col gap-4">
                  <InfoBar />
                  <div className="flex gap-4">
                    <ChartPanel />
                    <OrderBook />
                  </div>
                </div>
                <div className="flex w-[560px] shrink-0 flex-col gap-4">
                  <RiskCard />
                  <ConnectCard />
                  <TradeCard />
                </div>
              </main>
            </div>
            <div className="w-3 px-[2px]">
              <div className="h-[1152px] w-2 rounded-b-[4px] bg-[#23202d]" />
            </div>
          </div>
          <Footer />
        </div>
      </div>
    </div>
  );
}
